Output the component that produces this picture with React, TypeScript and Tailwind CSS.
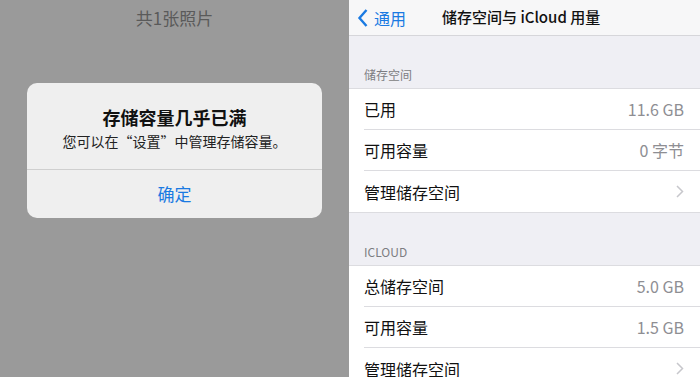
const font = "font-['Noto_Sans_CJK_SC','Noto_Sans',sans-serif]";

type Row = { label: string; value?: string; chevron?: boolean; last?: boolean };

function Chevron() {
  return (
    <svg width="8" height="13" viewBox="0 0 8 13" fill="none">
      <path d="M1 1l5.5 5.5L1 12" stroke="#c7c7cc" strokeWidth="1.5" />
    </svg>
  );
}

function SettingsRow({ label, value, chevron, last }: Row) {
  return (
    <div className="flex h-[41px] shrink-0 pl-[15px]">
      <div
        className={`flex flex-1 items-center justify-between pr-[16px] ${
          last ? "" : "border-b border-[#dcdce0]"
        }`}
      >
        <span className="text-[16px] text-[#111]">{label}</span>
        {value && <span className="text-[16px] text-[#8e8e93]">{value}</span>}
        {chevron && <Chevron />}
      </div>
    </div>
  );
}

function Section({ title, rows }: { title: string; rows: Row[] }) {
  return (
    <div className="shrink-0">
      <div className="flex h-[53px] items-end px-[15px] pb-[4px] border-b border-[#dcdce0]">
        <span className="text-[12px] text-[#7d7d82]">{title}</span>
      </div>
      <div className="bg-white border-b border-[#dcdce0]">
        {rows.map((r, i) => (
          <SettingsRow key={i} {...r} last={i === rows.length - 1} />
        ))}
      </div>
    </div>
  );
}

export default function App() {
  return (
    <div className={`flex w-[700px] h-[377px] overflow-hidden ${font}`}>
      <div className="flex flex-col w-[349px] shrink-0 bg-[#9a9a9a] items-center">
        <div className="mt-[6px] text-[17px] text-[#5a5a5a] leading-[24px]">共1张照片</div>
        <div className="mt-[53px] w-[295px] h-[135px] shrink-0 rounded-[10px] bg-[#efefef] flex flex-col">
          <div className="flex flex-col items-center h-[87px] pt-[22px] border-b border-[#cfcfcf]">
            <div className="text-[18px] font-semibold text-[#111] leading-[24px]">存储容量几乎已满</div>
            <div className="mt-[2px] text-[14px] text-[#222] leading-[20px]">您可以在“设置”中管理存储容量。</div>
          </div>
          <div className="flex flex-1 items-center justify-center text-[17px] text-[#1a7ae2]">确定</div>
        </div>
      </div>
      <div className="flex-1 flex flex-col bg-[#efeff4]">
        <div className="flex shrink-0 items-center h-[36px] bg-[#f7f7f8] border-b border-[#d6d6da]">
          <div className="flex items-center pl-[8px] text-[#1a7ae2]">
            <svg width="12" height="20" viewBox="0 0 12 20" fill="none">
              <path d="M9.5 2L2.5 10l7 8" stroke="#1a7ae2" strokeWidth="2.4" />
            </svg>
            <span className="ml-[5px] text-[16px]">通用</span>
          </div>
          <span className="ml-[36px] text-[15px] font-medium text-[#111]">储存空间与 iCloud 用量</span>
        </div>
        <Section
          title="储存空间"
          rows={[
            { label: "已用", value: "11.6 GB" },
            { label: "可用容量", value: "0 字节" },
            { label: "管理储存空间", chevron: true },
          ]}
        />
        <Section
          title="ICLOUD"
          rows={[
            { label: "总储存空间", value: "5.0 GB" },
            { label: "可用容量", value: "1.5 GB" },
            { label: "管理储存空间", chevron: true },
          ]}
        />
      </div>
    </div>
  );
}
